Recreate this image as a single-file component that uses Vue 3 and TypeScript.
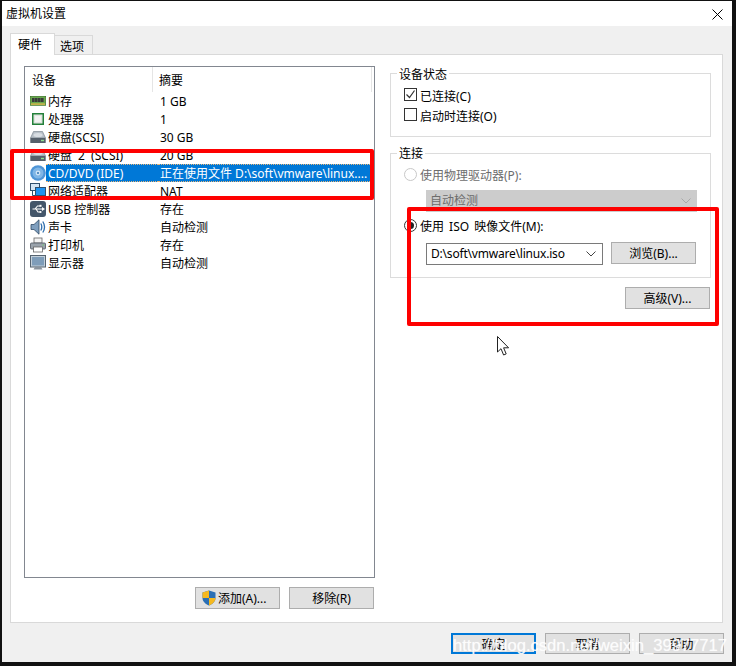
<script setup lang="ts">
interface Device { icon: string; name: string; summary: string; selected?: boolean; wide?: boolean }
const devices: Device[] = [
  { icon: 'mem', name: '内存', summary: '1 GB' },
  { icon: 'cpu', name: '处理器', summary: '1' },
  { icon: 'hdd', name: '硬盘(SCSI)', summary: '30 GB' },
  { icon: 'hdd', name: '硬盘 2 (SCSI)', summary: '20 GB', wide: true },
  { icon: 'cd', name: 'CD/DVD (IDE)', summary: '正在使用文件 D:\\soft\\vmware\\linux....', selected: true },
  { icon: 'net', name: '网络适配器', summary: 'NAT' },
  { icon: 'usb', name: 'USB 控制器', summary: '存在' },
  { icon: 'snd', name: '声卡', summary: '自动检测' },
  { icon: 'prn', name: '打印机', summary: '存在' },
  { icon: 'mon', name: '显示器', summary: '自动检测' },
]
</script>

<template>
  <div class="root">
    <div class="win">
      <div class="title">
        <span>虚拟机设置</span>
        <svg class="close" width="11" height="11" viewBox="0 0 11 11"><path d="M.5.5l10 10M10.500.5l-10 10" stroke="#000" stroke-width="1" fill="none" /></svg>
      </div>
      <div class="tabs">
        <div class="tab active">硬件</div>
        <div class="tab">选项</div>
      </div>
      <div class="pane">
        <div class="left">
          <div class="list">
            <div class="head">
              <div class="h1">设备</div>
              <div class="h2">摘要</div>
            </div>
            <div v-for="d in devices" :key="d.name" class="row" :class="{ selected: d.selected, wide: d.wide }">
              <svg class="ic" width="16" height="16" viewBox="0 0 16 16">
                <g v-if="d.icon === 'mem'">
                  <rect x=".3" y="3.300" width="15.400" height="9" fill="#6aa84f" stroke="#2f6b1c" stroke-width=".6" />
                  <rect x="2" y="5" width="2.600" height="4" fill="#3a3a3a" /><rect x="5" y="5" width="2.600" height="4" fill="#3a3a3a" />
                  <rect x="8" y="5" width="2.600" height="4" fill="#3a3a3a" /><rect x="11" y="5" width="2.600" height="4" fill="#3a3a3a" />
                  <rect x="1" y="10.400" width="14" height="1.400" fill="#d9b64a" />
                </g>
                <g v-else-if="d.icon === 'cpu'">
                  <rect x="2" y="2" width="12" height="12" fill="#23803a" />
                  <rect x="3.500" y="3.500" width="9" height="9" fill="#dfe5df" />
                  <rect x="5" y="5" width="6" height="6" fill="#f2f2f2" />
                </g>
                <g v-else-if="d.icon === 'hdd'">
                  <path d="M3.500 2.500h9l3 6.500H.5z" fill="#b8c0c8" stroke="#6f7a85" stroke-width=".6" />
                  <ellipse cx="8" cy="6" rx="4.500" ry="2" fill="#d8dde2" />
                  <rect x=".3" y="9" width="15.400" height="5" rx=".6" fill="#56606b" />
                  <rect x="11" y="10.800" width="3" height="1.400" fill="#8fe08f" />
                </g>
                <g v-else-if="d.icon === 'cd'">
                  <circle cx="8" cy="8" r="7.800" fill="#4f95d6" />
                  <circle cx="8" cy="8" r="5.500" fill="#7fb6e6" />
                  <circle cx="8" cy="8" r="2.400" fill="#cfe4f6" />
                  <circle cx="8" cy="8" r="1" fill="#2f74b5" />
                </g>
                <g v-else-if="d.icon === 'net'">
                  <rect x=".5" y=".5" width="9" height="7" fill="#d6e6f4" stroke="#31506e" />
                  <path d="M2.500 7.500v5h3" stroke="#31506e" fill="none" />
                  <rect x="5.500" y="4.500" width="10" height="8" fill="#1f93f0" stroke="#31506e" />
                  <rect x="6.500" y="13" width="8" height="2" fill="#9aa6b2" />
                </g>
                <g v-else-if="d.icon === 'usb'">
                  <rect x="0" y="0" width="16" height="16" rx="3" fill="#44566a" />
                  <path d="M2.500 8h10M5 8l2.500-3H10M6 8l2 3h2" stroke="#fff" stroke-width="1.100" fill="none" />
                  <path d="M12 6l3 2-3 2z" fill="#fff" /><rect x="9.500" y="3.800" width="2" height="2" fill="#fff" /><circle cx="10.500" cy="11" r="1.100" fill="#fff" />
                </g>
                <g v-else-if="d.icon === 'snd'">
                  <path d="M1 5.500h3L9 .8v14.400l-5-4.700H1z" fill="#7f9fbf" stroke="#2f4a66" stroke-width=".8" />
                  <path d="M10.800 4.500q2 3.500 0 7M12.800 2.500q3.500 5.500 0 11" stroke="#2f6fae" stroke-width="1.300" fill="none" />
                </g>
                <g v-else-if="d.icon === 'prn'">
                  <rect x="4" y="1" width="8" height="5" fill="#f4f4f4" stroke="#666" stroke-width=".8" />
                  <rect x=".5" y="6" width="15" height="6" rx="1" fill="#9aa3ac" stroke="#4f5660" stroke-width=".8" />
                  <rect x="12.500" y="7.500" width="1.500" height="1" fill="#6fd06f" />
                  <rect x="3.500" y="10" width="9" height="5" fill="#fff" stroke="#666" stroke-width=".8" />
                </g>
                <g v-else-if="d.icon === 'mon'">
                  <rect x=".5" y=".5" width="15" height="11.500" fill="#c4d0da" stroke="#56636f" />
                  <rect x="2" y="2" width="12" height="8.500" fill="#7f9db9" />
                  <path d="M5 12h6l1.500 2.500H3.500z" fill="#8a949e" />
                </g>
              </svg>
              <div class="c1">{{ d.name }}</div>
              <div class="c2">{{ d.summary }}</div>
            </div>
          </div>
          <div class="list-btns">
            <button class="btn shield-btn">
              <svg width="16" height="16" viewBox="0 0 16 16"><path d="M8 .5L14.500 2.500V8c0 3.500-3 6-6.500 7.500C4.500 14 1.500 11.500 1.500 8V2.500z" fill="#2a6fb5" /><path d="M8 .5V8H1.500V2.500zM8 8h6.500c0 3.500-3 6-6.500 7.500z" fill="#f5b81f" /></svg>
              <span>添加(A)...</span>
            </button>
            <button class="btn"><span>移除(R)</span></button>
          </div>
        </div>
        <div class="right">
          <div class="group status">
            <div class="legend">设备状态</div>
            <div class="opt">
              <span class="cb"><svg width="11" height="11" viewBox="0 0 11 11"><path d="M1.500 5.500l3 3 5-7" stroke="#333" stroke-width="1.200" fill="none" /></svg></span>
              <span class="otext">已连接(C)</span>
            </div>
            <div class="opt">
              <span class="cb"></span>
              <span class="otext">启动时连接(O)</span>
            </div>
          </div>
          <div class="group conn">
            <div class="legend">连接</div>
            <div class="opt radio-row disabled">
              <span class="radio off"></span>
              <span class="otext">使用物理驱动器(P):</span>
            </div>
            <div class="sel-box disabled-box">
              <span>自动检测</span>
              <svg width="10" height="6" viewBox="0 0 10 6"><path d="M.5.500l4.500 4.500L9.500.500" stroke="#a8a8a8" fill="none" /></svg>
            </div>
            <div class="opt radio-row iso">
              <span class="radio on"></span>
              <span class="otext wide-text">使用 ISO 映像文件(M):</span>
            </div>
            <div class="iso-line">
              <div class="sel-box combo">
                <span>D:\soft\vmware\linux.iso</span>
                <svg width="10" height="6" viewBox="0 0 10 6"><path d="M.5.500l4.500 4.500L9.500.500" stroke="#444" fill="none" /></svg>
              </div>
              <button class="btn"><span>浏览(B)...</span></button>
            </div>
          </div>
          <div class="adv"><button class="btn"><span>高级(V)...</span></button></div>
        </div>
      </div>
      <div class="footer">
        <button class="btn primary"><span>确定</span></button>
        <button class="btn"><span>取消</span></button>
        <button class="btn"><span>帮助</span></button>
      </div>
    </div>
    <div class="mark mark-a"></div>
    <div class="mark mark-b"></div>
    <svg class="cursor" width="14" height="20" viewBox="0 0 14 20"><path d="M.5.500V16l3.500-3.300 2.600 6.300 2.600-1.100-2.600-6.100h5z" fill="#fff" stroke="#222" stroke-width="1" /></svg>
    <div class="watermark">http://blog.csdn.net/weixin_39977717</div>
  </div>
</template>

<style>
html, body { margin: 0; padding: 0; background: #000; }
</style>

<style scoped>
.root {
  position: relative;
  width: 736px;
  height: 666px;
  box-sizing: border-box;
  padding: 1px 4px 4px 2px;
  background: #111;
  font: 12px/16px "Noto Sans", "Noto Sans CJK SC", sans-serif;
  color: #000;
  overflow: hidden;
}
.win { height: 100%; display: flex; flex-direction: column; background: #f0f0f0; }
.title {
  height: 25px;
  flex: none;
  background: #fff;
  display: flex;
  align-items: center;
  justify-content: space-between;
  padding: 0 9px 0 4px;
}
.close { margin-top: 1px; }
.tabs { display: flex; align-items: flex-end; height: 28px; flex: none; padding-left: 8px; }
.tab {
  height: 19px;
  width: 38px;
  box-sizing: border-box;
  border: 1px solid #d9d9d9;
  border-bottom: none;
  border-left: none;
  background: #f0f0f0;
  padding-left: 5px;
  line-height: 22px;
}
.tab.active {
  height: 22px;
  width: 45px;
  border-left: 1px solid #d9d9d9;
  background: #fff;
  margin-bottom: -1px;
  position: relative;
  padding-left: 7px;
  line-height: 21px;
}
.pane {
  flex: none;
  height: 569px;
  margin: 0 9px 0 8px;
  box-sizing: border-box;
  border: 1px solid #d9d9d9;
  background: #fff;
  display: flex;
  padding: 11px 11px 0 13px;
}
.left { width: 351px; flex: none; display: flex; flex-direction: column; }
.list {
  height: 512px;
  box-sizing: border-box;
  border: 1px solid #828790;
  background: #fff;
  flex: none;
}
.head { display: flex; height: 25px; }
.h1 { width: 128px; box-sizing: border-box; padding-left: 7px; line-height: 28px; border-right: 1px solid #e5e5e5; }
.h2 { flex: 1; padding-left: 6px; line-height: 28px; border-right: 1px solid #e5e5e5; margin-right: 2px; }
.row { display: flex; height: 18px; align-items: center; padding-left: 5px; }
.ic { flex: none; width: 16px; height: 16px; }
.c1 { width: 112px; box-sizing: border-box; flex: none; padding-left: 2px; line-height: 20px; height: 18px; white-space: nowrap; }
.c2 { flex: 1; padding-left: 2px; line-height: 20px; height: 18px; white-space: nowrap; margin-right: 2px; }
.wide .c1 { word-spacing: 3px; }
.selected .c1, .selected .c2 {
  background: #0078d7;
  color: #fff;
  box-sizing: border-box;
  border-top: 1px dotted #e9b77a;
  border-bottom: 1px dotted #e9b77a;
  line-height: 18px;
}
.list-btns { display: flex; justify-content: flex-end; gap: 9px; margin-top: 9px; margin-right: 1px; }
.btn {
  width: 85px;
  height: 22px;
  box-sizing: border-box;
  padding: 0;
  border: 1px solid #adadad;
  background: #e1e1e1;
  font: inherit;
  color: #000;
  display: flex;
  align-items: center;
  justify-content: center;
}
.btn span { margin-top: 2px; }
.shield-btn { justify-content: flex-start; padding-left: 5px; gap: 1px; }
.right { width: 321px; margin-left: 15px; flex: none; display: flex; flex-direction: column; margin-top: 7px; }
.group { border: 1px solid #dcdcdc; box-sizing: border-box; padding-left: 13px; }
.status { height: 64px; }
.conn { height: 125px; margin-top: 16px; }
.legend {
  width: fit-content;
  margin: -8px 0 0 -7px;
  padding: 0 2px;
  background: #fff;
  height: 16px;
  line-height: 17px;
}
.conn .legend { line-height: 15px; }
.opt { display: flex; align-items: center; height: 20px; gap: 3px; }
.otext { margin-top: 3px; }
.wide-text { word-spacing: 2px; }
.status .legend { margin-bottom: 3px; }
.cb {
  width: 13px;
  height: 13px;
  box-sizing: border-box;
  border: 1px solid #333;
  display: flex;
  align-items: center;
  justify-content: center;
  flex: none;
  margin-top: -1px;
}
.radio {
  width: 13px;
  height: 13px;
  box-sizing: border-box;
  border-radius: 50%;
  border: 1px solid #333;
  flex: none;
  display: flex;
  align-items: center;
  justify-content: center;
}
.radio.off { border-color: #c8c8c8; }
.radio.on::after { content: ""; width: 7px; height: 7px; border-radius: 50%; background: #222; }
.radio-row { margin-top: 2px; }
.disabled { color: #6d6d6d; }
.sel-box {
  box-sizing: border-box;
  display: flex;
  align-items: center;
  justify-content: space-between;
  margin-left: 22px;
  padding: 0 6px 0 4px;
}
.disabled-box { width: 271px; height: 22px; background: #cccccc; color: #6d6d6d; margin-top: 6px; }
.iso { margin-top: 3px; }
.iso-line { display: flex; align-items: flex-start; gap: 8px; margin-top: 7px; margin-left: 22px; }
.combo { margin-left: 0; width: 177px; height: 22px; border: 1px solid #7a7a7a; background: #fff; margin-top: 1px; letter-spacing: -.2px; }
.adv { display: flex; justify-content: flex-end; margin-top: 9px; margin-right: 1px; }
.footer { flex: 1; display: flex; justify-content: flex-end; gap: 9px; padding: 10px 8px 0 0; }
.footer .btn { height: 21px; }
.primary { border: 2px solid #0078d7; }
.mark { position: absolute; box-sizing: border-box; border: 4px solid #fe0000; border-radius: 2px; }
.mark-a { left: 10px; top: 149px; width: 364px; height: 51px; }
.mark-b { left: 407px; top: 207px; width: 312px; height: 119px; }
.cursor { position: absolute; left: 497px; top: 336px; }
.watermark {
  position: absolute;
  left: 453px;
  top: 633px;
  font: 16.6px/26px "Liberation Sans", sans-serif;
  color: rgba(255, 255, 255, .85);
  text-shadow: 0 0 1px rgba(255, 255, 255, .6);
  white-space: nowrap;
}
</style>
